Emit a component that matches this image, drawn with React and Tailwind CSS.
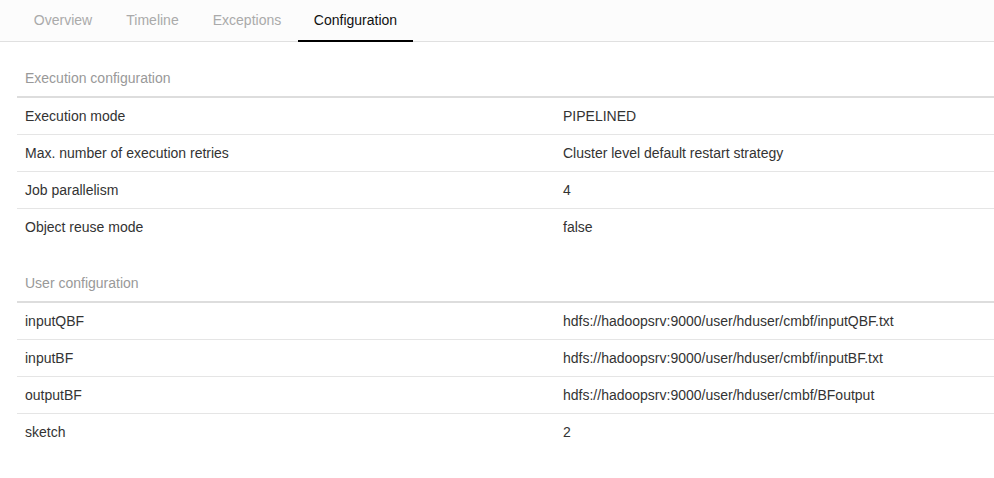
import React from 'react';

const tabs = [
  { label: 'Overview', w: 'w-[92px]' },
  { label: 'Timeline', w: 'w-[87px]' },
  { label: 'Exceptions', w: 'w-[102px]' },
  { label: 'Configuration', w: 'w-[115px]' },
];

const execConfig = [
  ['Execution mode', 'PIPELINED'],
  ['Max. number of execution retries', 'Cluster level default restart strategy'],
  ['Job parallelism', '4'],
  ['Object reuse mode', 'false'],
];

const userConfig = [
  ['inputQBF', 'hdfs://hadoopsrv:9000/user/hduser/cmbf/inputQBF.txt'],
  ['inputBF', 'hdfs://hadoopsrv:9000/user/hduser/cmbf/inputBF.txt'],
  ['outputBF', 'hdfs://hadoopsrv:9000/user/hduser/cmbf/BFoutput'],
  ['sketch', '2'],
];

const ConfigTable = ({ title, rows }) => (
  <table className="w-full table-fixed border-collapse text-sm">
    <colgroup>
      <col className="w-[538px]" />
      <col />
    </colgroup>
    <thead>
      <tr>
        <th colSpan={2} className="h-[37px] px-2 text-left font-normal text-[#999] border-b-2 border-[#ddd]">
          {title}
        </th>
      </tr>
    </thead>
    <tbody>
      {rows.map(([k, v], i) => (
        <tr key={k} className={i < rows.length - 1 ? 'border-b border-[#e5e5e5]' : ''}>
          <td className="h-[37px] px-2 text-[#333]">{k}</td>
          <td className="h-[37px] px-2 text-[#333]">{v}</td>
        </tr>
      ))}
    </tbody>
  </table>
);

export default () => {
  return (
    <div className="min-h-screen bg-white" style={{ fontFamily: '"Liberation Sans", Arial, sans-serif' }}>
      <div className="flex h-[42px] border-b border-[#e0e0e0] bg-[#fcfcfc] pl-[17px]">
        {tabs.map((t) => (
          <div
            key={t.label}
            className={
              'flex items-center justify-center text-sm border-b-2 -mb-px ' +
              t.w +
              ' ' +
              (t.label === 'Configuration' ? 'text-[#111] border-black' : 'text-[#aaa] border-transparent')
            }
          >
            {t.label}
          </div>
        ))}
      </div>
      <div className="pl-[17px] pt-[18px] flex flex-col gap-5">
        <ConfigTable title="Execution configuration" rows={execConfig} />
        <ConfigTable title="User configuration" rows={userConfig} />
      </div>
    </div>
  );
};
